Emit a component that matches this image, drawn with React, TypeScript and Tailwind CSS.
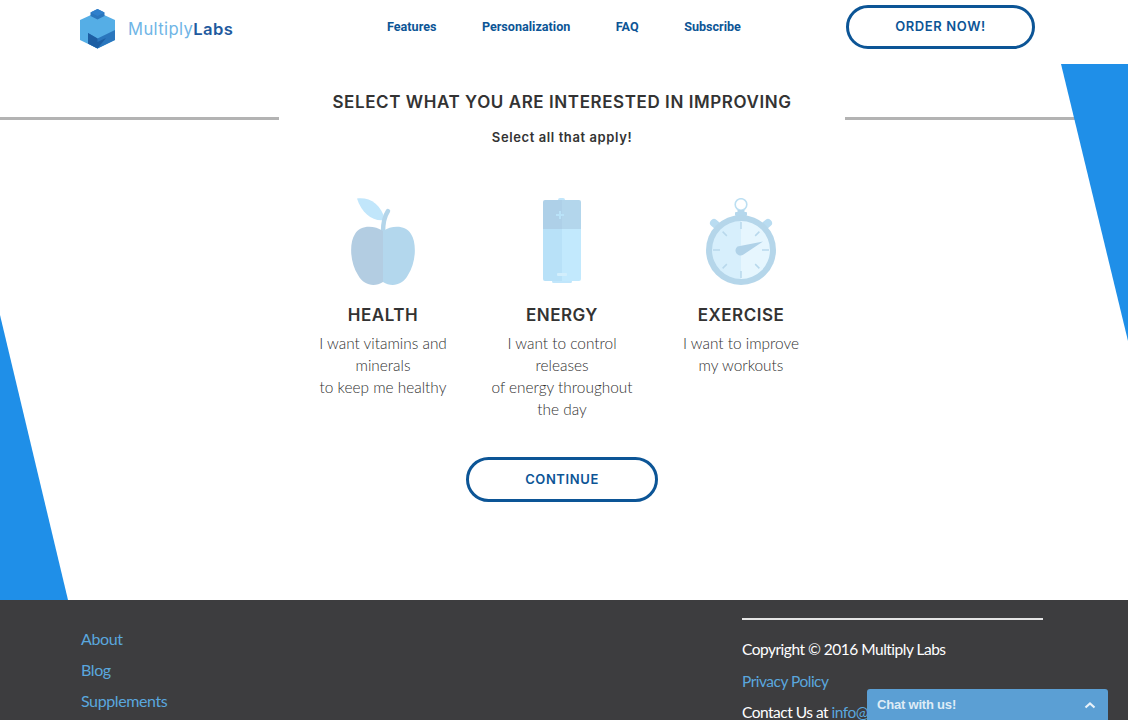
import React from "react";

const heading = { fontFamily: '"Inter", "Liberation Sans", sans-serif' };
const body = { fontFamily: '"Lato", "Liberation Sans", sans-serif' };

function Logo() {
  return (
    <svg width="36" height="40" viewBox="0 0 36 40">
      <path d="M17.5 3 L35 11 V31 L17.5 39.5 L0 31 V11 Z" fill="#55aee6" />
      <path d="M17.5 0 L24.5 3.5 V7 L17.5 10.5 L10.5 7 V3.5 Z" fill="#2a76bd" />
      <path d="M10.5 3.5 L17.5 7 L24.5 3.5 L17.5 0 Z" fill="#2f7fcb" />
      <path d="M8 24 L17.5 29.5 L35 21 V31 L17.5 39.5 L8 34.5 Z" fill="#2a76bd" />
      <path d="M8 24 L17.5 29.5 L17.5 33 L26 29 L17.5 39.5 L8 34.5 Z" fill="#1d5ea3" />
    </svg>
  );
}

function Apple() {
  return (
    <svg width="70" height="92" viewBox="0 0 70 92">
      <path d="M9 0.5 C22 -1 33 6 37 22 C25 24 14 16 9 0.5 Z" fill="#c1e6fb" />
      <path d="M35 34 C35 26 36 19 40 13" stroke="#b3d5ea" strokeWidth="4.5" fill="none" strokeLinecap="round" />
      <path d="M35 33 C26 27 12 27 7 36 C1 45 2 65 10 77 C16 88 27 89 35 84 Z" fill="#b3cde2" />
      <path d="M35 33 C44 27 58 27 63 36 C69 45 68 65 60 77 C54 88 43 89 35 84 Z" fill="#b3d7ed" />
    </svg>
  );
}

function Battery() {
  return (
    <svg width="38" height="88" viewBox="0 0 38 88">
      <rect x="15" y="0" width="7" height="4" rx="2" fill="#c1e6fb" />
      <rect x="9" y="82" width="20" height="3" rx="1.5" fill="#c1e6fb" />
      <path d="M2 2 H19 V31 H0 V4 A2 2 0 0 1 2 2 Z" fill="#aed0e8" />
      <path d="M19 2 H36 A2 2 0 0 1 38 4 V31 H19 Z" fill="#b3d6ec" />
      <path d="M0 31 H19 V83 H2 A2 2 0 0 1 0 81 Z" fill="#b8e1f8" />
      <path d="M19 31 H38 V81 A2 2 0 0 1 36 83 H19 Z" fill="#c2e9fd" />
      <path d="M17 13 V21 M13 17 H21" stroke="#b9e2f8" strokeWidth="2" />
      <rect x="14" y="75" width="10" height="3" rx="1" fill="#d2eefc" />
    </svg>
  );
}

function Watch() {
  const ticks = [0, 45, 90, 135, 180, 225, 270, 315];
  return (
    <svg width="72" height="90" viewBox="0 0 72 90">
      <circle cx="36" cy="6.5" r="5.8" fill="none" stroke="#bcdff2" strokeWidth="1.6" />
      <rect x="32.5" y="12" width="7" height="6" fill="#b5d7ec" />
      <rect x="30" y="14" width="12" height="4" rx="1" fill="#b5d7ec" />
      <line x1="9" y1="25" x2="15" y2="30" stroke="#b9dcf1" strokeWidth="8" strokeLinecap="round" />
      <line x1="63" y1="25" x2="57" y2="30" stroke="#b9dcf1" strokeWidth="8" strokeLinecap="round" />
      <circle cx="36" cy="52" r="35" fill="#b5d6ea" />
      <path d="M36 23 A29 29 0 0 0 36 81 Z" fill="#d7effc" />
      <path d="M36 23 A29 29 0 0 1 36 81 Z" fill="#e6f6fe" />
      {ticks.map((a) => {
        const long = a % 90 === 0;
        return (
          <line
            key={a}
            x1="36"
            y1={long ? 24 : 26}
            x2="36"
            y2={long ? 31 : 32}
            stroke="#b8d8ec"
            strokeWidth="1.5"
            transform={`rotate(${a} 36 52)`}
          />
        );
      })}
      <path d="M32.5 48.5 L58 43.5 L38.5 56.5 A5 5 0 1 1 32.5 48.5 Z" fill="#b0d2e8" />
    </svg>
  );
}

function Feature({ icon, title, lines }: { icon: React.ReactNode; title: string; lines: string[] }) {
  return (
    <div className="w-[179px] flex flex-col items-center px-3">
      <div className="h-[92px] flex items-start justify-center">{icon}</div>
      <div className="mt-[13px] text-[17px] leading-[24px] font-semibold text-[#333333] tracking-[0.5px]" style={heading}>
        {title}
      </div>
      <div className="mt-[5px] text-[#303030] text-[15.4px] leading-[22px] font-light text-center whitespace-nowrap" style={body}>
        {lines.map((l) => (
          <div key={l}>{l}</div>
        ))}
      </div>
    </div>
  );
}

export default function App() {
  return (
    <div className="relative w-[1128px] h-[720px] overflow-hidden bg-white" style={body}>
      <header className="h-[64px] flex items-start pl-[80px] pr-[93px] pt-[5px]">
        <div className="flex items-center w-[307px] mt-[4px]">
          <Logo />
          <span className="ml-[12px] text-[16.6px] text-[#6fb5e6] tracking-[0.4px]" style={heading}>
            Multiply<span className="font-semibold text-[#1f5a9e]">Labs</span>
          </span>
        </div>
        <nav className="flex gap-[45.5px] mt-[13px] text-[12.6px] font-bold text-[#0c5596]" style={{ fontFamily: "Roboto, sans-serif" }}>
          <a>Features</a>
          <a>Personalization</a>
          <a>FAQ</a>
          <a>Subscribe</a>
        </nav>
        <button
          className="ml-auto w-[189px] h-[44px] rounded-full border-[3px] border-[#0c5596] text-[13px] font-semibold tracking-[0.6px] text-[#0c5596]"
          style={heading}
        >
          ORDER NOW!
        </button>
      </header>

      <main className="relative h-[536px] pt-[26px]">
        <div className="flex items-start">
          <div className="w-[279px] h-[3px] mt-[27px] bg-[#b3b3b3]" />
          <div className="w-[566px] text-center">
            <h1 className="text-[17px] leading-[24px] font-semibold text-[#333333] tracking-[0.58px]" style={heading}>
              SELECT WHAT YOU ARE INTERESTED IN IMPROVING
            </h1>
            <p className="mt-[13px] text-[13px] leading-[20px] font-semibold text-[#333333] tracking-[0.6px]" style={heading}>
              Select all that apply!
            </p>
          </div>
          <div className="w-[235px] h-[3px] mt-[27px] bg-[#b3b3b3]" />
        </div>

        <div className="flex justify-center w-[1124px] mt-[51px]">
          <Feature icon={<Apple />} title="HEALTH" lines={["I want vitamins and", "minerals", "to keep me healthy"]} />
          <Feature icon={<Battery />} title="ENERGY" lines={["I want to control", "releases", "of energy throughout", "the day"]} />
          <Feature icon={<Watch />} title="EXERCISE" lines={["I want to improve", "my workouts"]} />
        </div>

        <div className="flex justify-center w-[1124px] mt-[37px]">
          <button
            className="w-[192px] h-[45px] rounded-full border-[3px] border-[#0c5596] text-[13px] font-semibold tracking-[0.6px] text-[#0c5596]"
            style={heading}
          >
            CONTINUE
          </button>
        </div>

        <svg className="absolute left-0 top-0 pointer-events-none" width="1128" height="536" viewBox="0 0 1128 536">
          <polygon points="1061,0 1128,0 1128,277" fill="#1f8fe8" />
          <polygon points="0,251 68,536 0,536" fill="#1f8fe8" />
        </svg>
      </main>

      <footer className="h-[120px] bg-[#3d3d3f] flex pl-[81px]">
        <div className="w-[661px] pt-[28px] flex flex-col gap-[10px] text-[16px] leading-[21px] tracking-[-0.4px] text-[#5aa7de]">
          <a>About</a>
          <a>Blog</a>
          <a>Supplements</a>
        </div>
        <div className="w-[301px] pt-[18px] text-[15.5px] leading-[21px] tracking-[-0.5px]">
          <div className="h-[2px] bg-[#e5e5e5]" />
          <div className="mt-[19px] text-white">Copyright © 2016 Multiply Labs</div>
          <div className="mt-[11px] text-[#5aa7de]">Privacy Policy</div>
          <div className="mt-[10px] text-white whitespace-nowrap">
            Contact Us at <span className="text-[#5aa7de]">info@multiplylabs.com</span>
          </div>
        </div>
      </footer>

      <div className="absolute left-[867px] top-[689px] w-[241px] h-[31px] rounded-t-[3px] bg-[#5b9fd4] flex items-center justify-between pl-[10px] pr-[12px] text-[13px] tracking-[-0.2px] font-bold text-[#dfecf6]" style={{ fontFamily: '"Liberation Sans", sans-serif' }}>
        <span>Chat with us!</span>
        <svg width="12" height="8" viewBox="0 0 12 8" fill="none" stroke="#e8f2fa" strokeWidth="2.2">
          <path d="M1.5 6.5 L6 2.5 L10.5 6.5" />
        </svg>
      </div>
    </div>
  );
}
